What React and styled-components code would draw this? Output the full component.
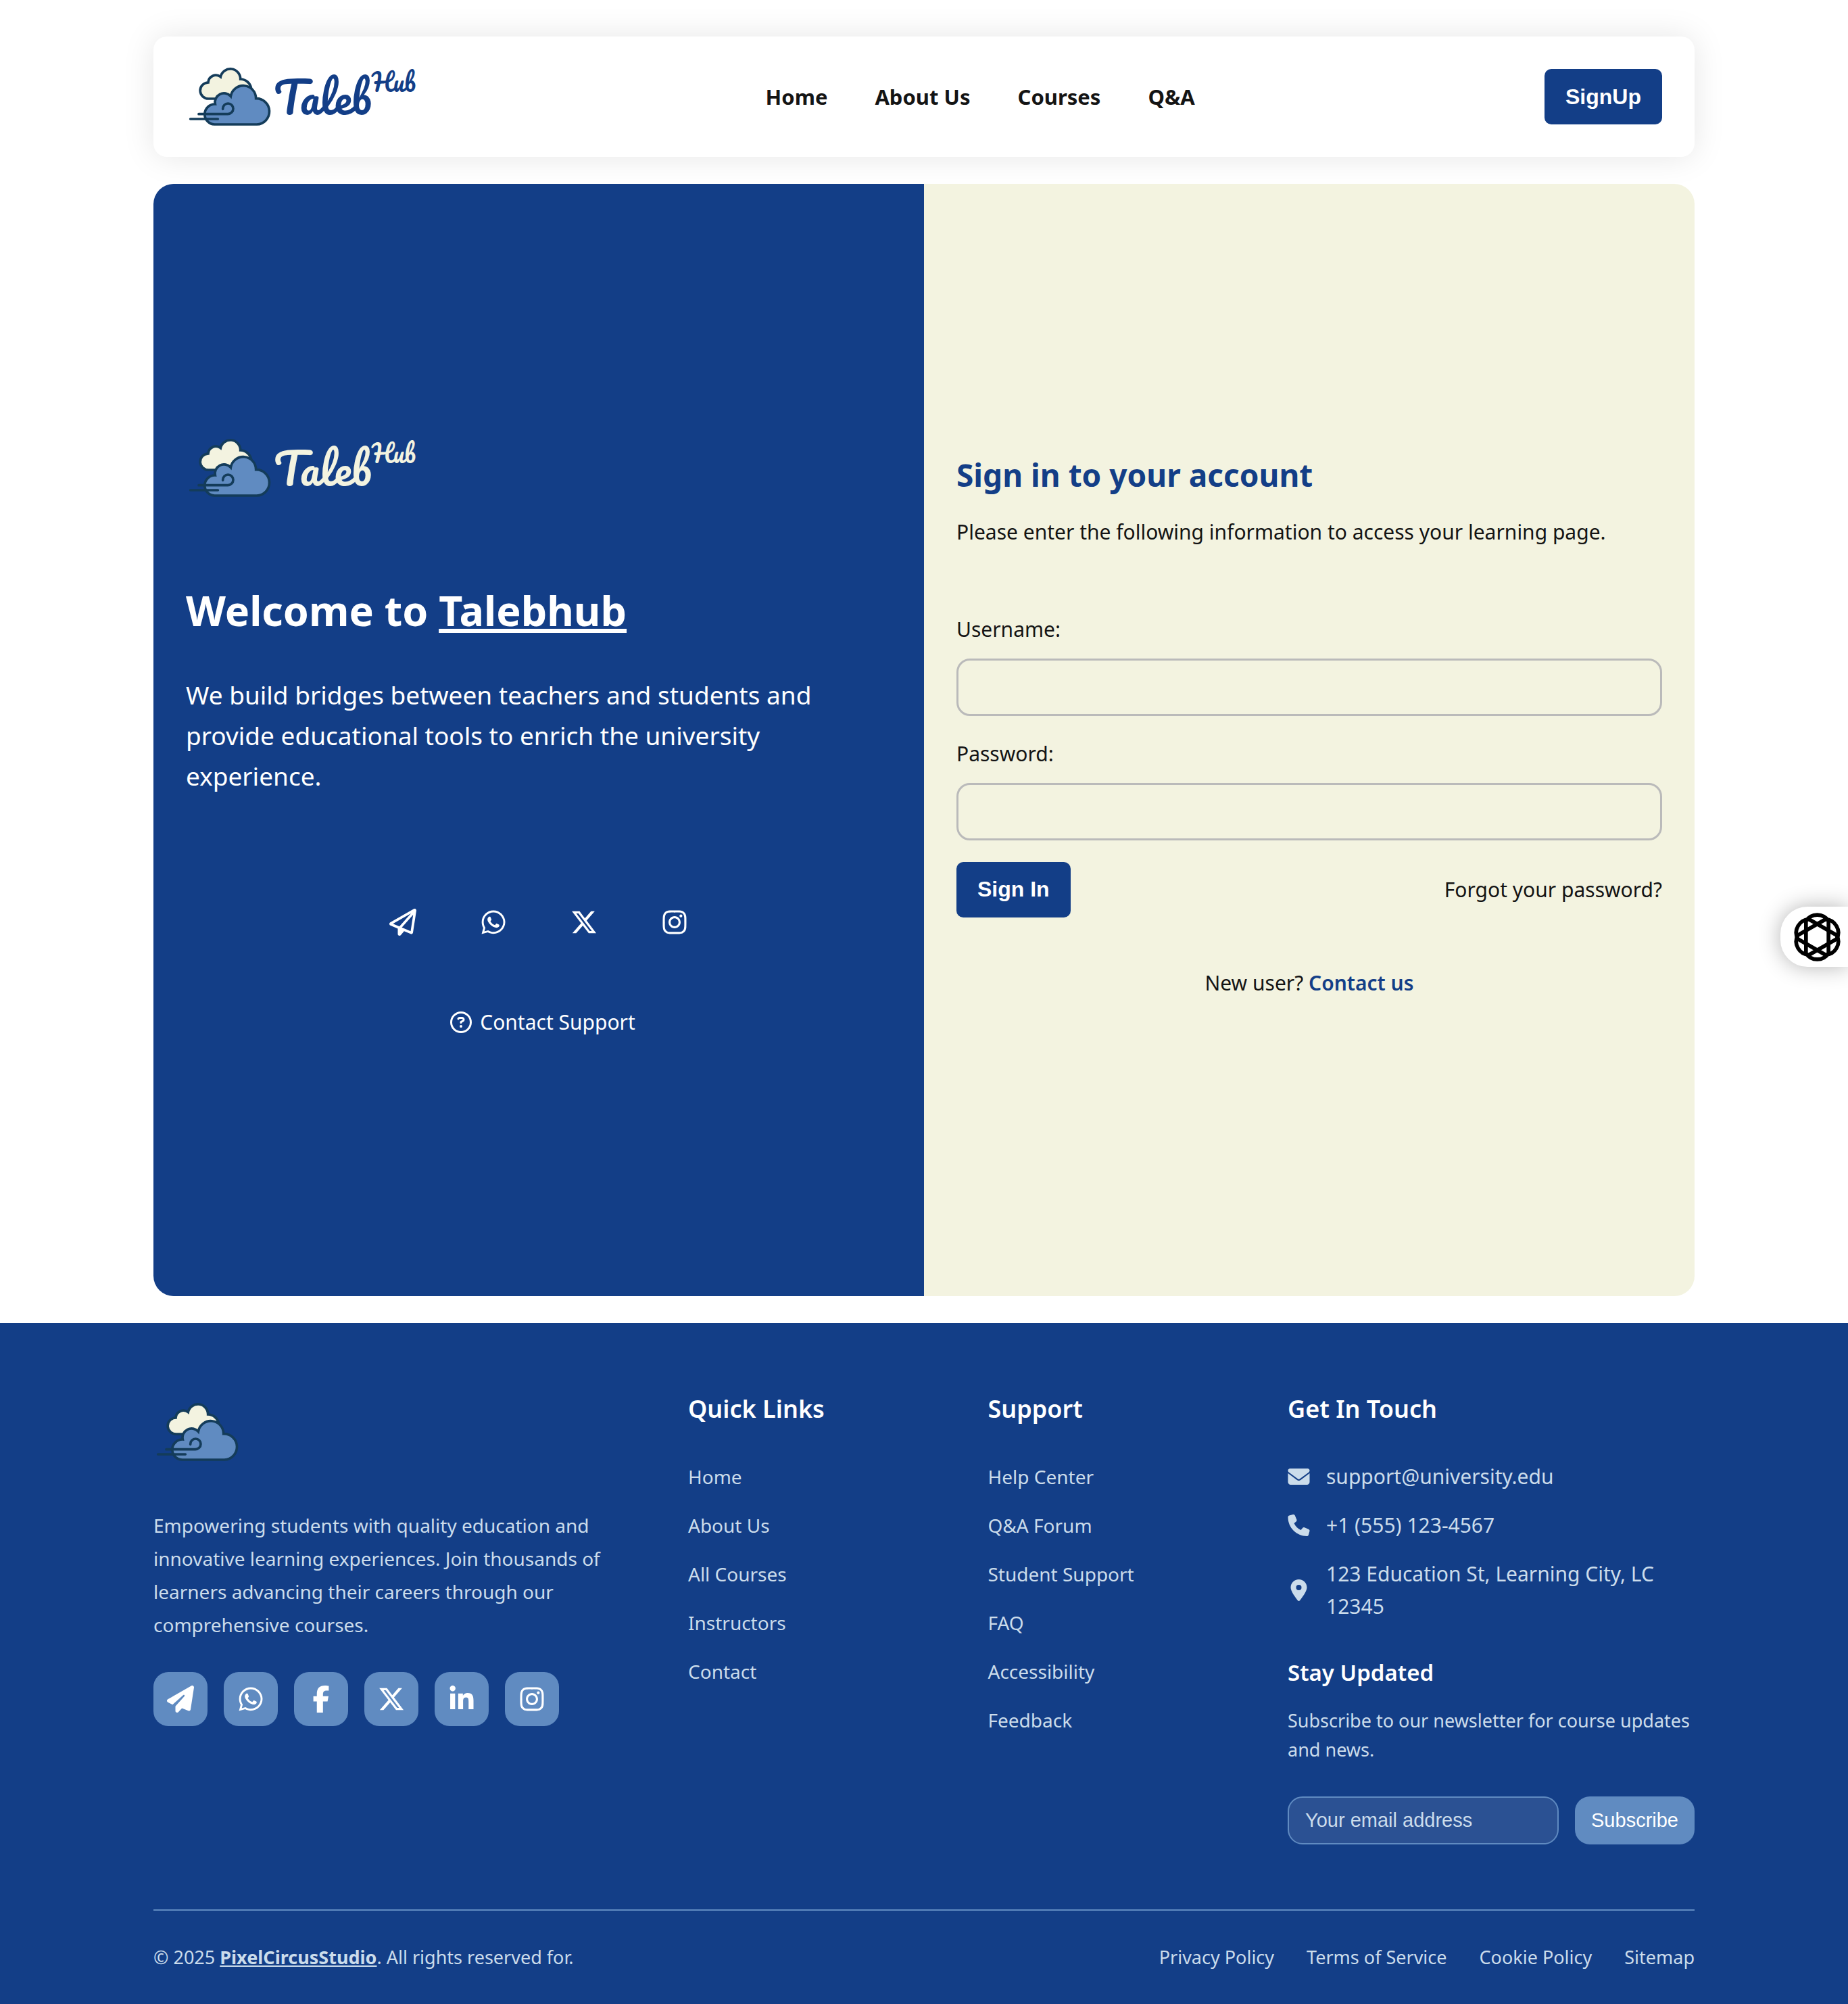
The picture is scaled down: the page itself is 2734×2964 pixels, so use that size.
import React from "react";
import styled, { createGlobalStyle } from "styled-components";
import {
  FaRegPaperPlane,
  FaPaperPlane,
  FaWhatsapp,
  FaXTwitter,
  FaInstagram,
  FaFacebookF,
  FaLinkedinIn,
  FaRegCircleQuestion,
  FaEnvelope,
  FaPhone,
  FaLocationDot,
} from "react-icons/fa6";

const color = {
  navy: "#133e87",
  cream: "#f3f3e0",
  sky: "#608bc1",
  ice: "#cbdceb",
  ink: "#141414",
  outline: "#143c5a",
};

const GlobalStyle = createGlobalStyle`
  *, *::before, *::after { box-sizing: border-box; }
  body {
    margin: 0;
    background: #fff;
    color: ${color.ink};
    font-family: "Noto Sans", "Open Sans", sans-serif;
    font-size: 30px;
    line-height: 48px;
    overflow-x: hidden;
  }
  h1, h2, h3, h4, p, ul { margin: 0; padding: 0; }
  ul { list-style: none; }
  a { color: inherit; text-decoration: none; }
  svg { display: block; flex: none; }
`;

const Container = styled.div`
  width: 100%;
  max-width: 2280px;
  margin: 0 auto;
`;

/* ---------- Logo ---------- */

const LogoRow = styled.a`
  display: flex;
  align-items: center;
  height: 90px;
  color: ${(p) => p.$tone};
  font-family: Pacifico, Lato, sans-serif;
`;

const CloudSvg = styled.svg`
  width: 130px;
  height: 90px;
`;

const LogoWord = styled.span`
  font-size: 64px;
  font-weight: 400;
  line-height: 90px;
`;

const LogoSup = styled.span`
  align-self: flex-start;
  font-size: 36px;
  font-weight: 400;
  line-height: 46px;
`;

function Cloud() {
  return (
    <CloudSvg
      viewBox="195 205 390 270"
      fill="none"
      stroke={color.outline}
      strokeWidth="11"
      strokeLinecap="round"
      aria-hidden="true"
    >
      <path
        fill={color.cream}
        d="M335 349H297A37 36 0 0 1 294 277A34 34 0 0 1 349 252A44.500 44.500 0 0 1 437 262A50 50 0 0 1 485 303L400 349Z"
      />
      <path
        fill={color.sky}
        d="M322 463A45 45 0 0 1 325 373A40 40 0 0 1 394 338A56.400 56.400 0 0 1 506 348A57 57 0 0 1 510 463Z"
      />
      <path d="M252 417H381A24 24 0 0 0 405 393A23 23 0 0 0 359 393V395" />
      <path d="M215 439H337" />
    </CloudSvg>
  );
}

function Logo({ tone }) {
  return (
    <LogoRow href="#" $tone={tone}>
      <Cloud />
      <LogoWord>Taleb</LogoWord>
      <LogoSup>Hub</LogoSup>
    </LogoRow>
  );
}

/* ---------- Header ---------- */

const Header = styled.header`
  display: flex;
  align-items: center;
  justify-content: space-between;
  min-height: 178px;
  margin: 54px 0 40px;
  padding: 0 48px;
  border-radius: 20px;
  background: #fff;
  box-shadow: 0 0 48px rgba(0, 0, 0, 0.1);
`;

const Nav = styled.nav`
  display: flex;
  gap: 70px;
  font-size: 31px;
  font-weight: 700;
`;

const PrimaryButton = styled.button`
  height: 82px;
  padding: 0 31px;
  border: 0;
  border-radius: 10px;
  background: ${color.navy};
  color: #fff;
  font: 700 32px "Liberation Sans", Arial, sans-serif;
`;

/* ---------- Sign-in card ---------- */

const Card = styled.main`
  display: grid;
  grid-template-columns: 1fr 1fr;
  min-height: 55.5vh;
  margin-bottom: 40px;
  border-radius: 30px;
  overflow: hidden;
`;

const Welcome = styled.section`
  display: flex;
  flex-direction: column;
  justify-content: center;
  align-items: flex-start;
  padding: 0 48px 4px;
  background: ${color.navy};
  color: #fff;
`;

const WelcomeTitle = styled.h1`
  margin: 126px 0 55px;
  font-size: 61px;
  font-weight: 700;
  line-height: 80px;

  span { text-decoration: underline; }
`;

const WelcomeText = styled.p`
  font-size: 37px;
  line-height: 60px;
`;

const PlainSocials = styled.div`
  display: flex;
  align-self: center;
  gap: 94px;
  margin: 166px 0 102px;

  svg { width: 40px; height: 40px; }
`;

const SupportLink = styled.a`
  display: flex;
  align-self: center;
  align-items: center;
  gap: 12px;
  padding-left: 12px;
  line-height: 52px;

  svg { width: 32px; height: 32px; }
`;

const SignIn = styled.form`
  display: flex;
  flex-direction: column;
  justify-content: center;
  padding: 0 48px 40px;
  background: ${color.cream};
`;

const SignInTitle = styled.h2`
  color: ${color.navy};
  font-size: 46px;
  font-weight: 700;
  line-height: 60px;
`;

const SignInText = styled.p`
  margin: 31px 0 96px;
`;

const Field = styled.div`
  display: flex;
  flex-direction: column;
  gap: 19px;
  margin-bottom: 32px;
`;

const FieldInput = styled.input`
  height: 85px;
  padding: 0 24px;
  border: 3px solid #bababa;
  border-radius: 20px;
  background: transparent;
  font: inherit;
`;

const FormActions = styled.div`
  display: flex;
  align-items: center;
  justify-content: space-between;
`;

const NewUser = styled.p`
  margin-top: 73px;
  text-align: center;

  a { color: ${color.navy}; font-weight: 600; }
`;

/* ---------- Footer ---------- */

const FooterBar = styled.footer`
  padding-top: 96px;
  background: ${color.navy};
  color: ${color.ice};
`;

const FooterGrid = styled.div`
  display: grid;
  grid-template-columns: 2fr 1fr 1fr 602px;
  gap: 96px;
  padding-bottom: 96px;
`;

const Brand = styled.div`
  padding-top: 20px;
`;

const BrandText = styled.p`
  margin: 69px 0 45px;
  font-size: 28px;
  line-height: 49px;
`;

const TileRow = styled.div`
  display: flex;
  gap: 24px;
`;

const SocialTile = styled.a`
  display: flex;
  align-items: center;
  justify-content: center;
  width: 80px;
  height: 80px;
  border-radius: 22px;
  background: ${color.sky};
  color: #fff;

  svg { width: 40px; height: 40px; }
`;

const FooterTitle = styled.h3`
  margin-bottom: 45px;
  color: #fff;
  font-size: 36px;
  font-weight: 600;
  line-height: 62px;
`;

const FooterList = styled.ul`
  display: flex;
  flex-direction: column;
  gap: 24px;
  font-size: ${(p) => (p.$large ? 30 : 28)}px;
`;

const ContactItem = styled.li`
  display: flex;
  align-items: center;
  gap: 24px;

  svg { width: 33px; height: 32px; }
`;

const Newsletter = styled.form`
  margin-top: 50px;
`;

const NewsletterTitle = styled.h4`
  color: #fff;
  font-size: 33px;
  font-weight: 600;
`;

const NewsletterText = styled.label`
  display: block;
  margin: 25px 0 48px;
  font-size: 27px;
  line-height: 43px;
`;

const NewsletterRow = styled.div`
  display: flex;
  gap: 24px;
`;

const EmailInput = styled.input`
  flex: 1;
  min-width: 0;
  height: 71px;
  padding: 0 24px;
  border: 2px solid ${color.sky};
  border-radius: 22px;
  background: rgba(255, 255, 255, 0.1);
  color: #fff;
  font: 29px "Liberation Sans", Arial, sans-serif;

  &::placeholder { color: ${color.ice}; opacity: 1; }
`;

const SubscribeButton = styled.button`
  height: 71px;
  padding: 0 24px;
  border: 0;
  border-radius: 22px;
  background: ${color.sky};
  color: #fff;
  font: 29px "Liberation Sans", Arial, sans-serif;
`;

const Legal = styled.div`
  display: flex;
  justify-content: space-between;
  padding: 45px 0;
  border-top: 2px solid ${color.sky};
  font-size: 27px;

  strong { text-decoration: underline; }
`;

const LegalLinks = styled.nav`
  display: flex;
  gap: 48px;
`;

/* ---------- Floating assistant tab ---------- */

const AssistantTab = styled.button`
  position: fixed;
  top: 1341px;
  right: 0;
  display: flex;
  align-items: center;
  width: 100px;
  height: 89px;
  padding: 0 0 0 18px;
  border: 0;
  border-radius: 40px 0 0 40px;
  background: #fff;
  box-shadow: 0 0 32px rgba(0, 0, 0, 0.3);
`;

const lobe = "M215 158A59 59 0 0 1 315 158V300A59 59 0 0 1 215 300Z";

function AssistantIcon() {
  return (
    <svg width="73" height="76" viewBox="155.500 115 219 228" fill="none" stroke="#000" strokeWidth="17" aria-hidden="true">
      <path d={lobe} />
      <path d={lobe} transform="rotate(60 265 229)" />
      <path d={lobe} transform="rotate(120 265 229)" />
    </svg>
  );
}

const navLinks = ["Home", "About Us", "Courses", "Q&A"];
const quickLinks = ["Home", "About Us", "All Courses", "Instructors", "Contact"];
const supportLinks = ["Help Center", "Q&A Forum", "Student Support", "FAQ", "Accessibility", "Feedback"];
const legalLinks = ["Privacy Policy", "Terms of Service", "Cookie Policy", "Sitemap"];
const welcomeSocials = [
  ["Telegram", FaRegPaperPlane],
  ["WhatsApp", FaWhatsapp],
  ["X", FaXTwitter],
  ["Instagram", FaInstagram],
];
const footerSocials = [
  ["Telegram", FaPaperPlane],
  ["WhatsApp", FaWhatsapp],
  ["Facebook", FaFacebookF],
  ["X", FaXTwitter],
  ["LinkedIn", FaLinkedinIn],
  ["Instagram", FaInstagram],
];
const contacts = [
  ["support@university.edu", FaEnvelope],
  ["+1 (555) 123-4567", FaPhone],
  ["123 Education St, Learning City, LC 12345", FaLocationDot],
];

function LinkColumn({ title, links }) {
  return (
    <div>
      <FooterTitle>{title}</FooterTitle>
      <FooterList>
        {links.map((label) => (
          <li key={label}>
            <a href="#">{label}</a>
          </li>
        ))}
      </FooterList>
    </div>
  );
}

export default function App() {
  return (
    <>
      <GlobalStyle />
      <Container>
        <Header>
          <Logo tone={color.navy} />
          <Nav>
            {navLinks.map((label) => (
              <a key={label} href="#">{label}</a>
            ))}
          </Nav>
          <PrimaryButton type="button">SignUp</PrimaryButton>
        </Header>

        <Card>
          <Welcome>
            <Logo tone={color.cream} />
            <WelcomeTitle>
              Welcome to <span>Talebhub</span>
            </WelcomeTitle>
            <WelcomeText>
              We build bridges between teachers and students and provide
              educational tools to enrich the university experience.
            </WelcomeText>
            <PlainSocials>
              {welcomeSocials.map(([label, Icon]) => (
                <a key={label} href="#" aria-label={label}><Icon /></a>
              ))}
            </PlainSocials>
            <SupportLink href="#">
              <FaRegCircleQuestion />
              Contact Support
            </SupportLink>
          </Welcome>

          <SignIn>
            <SignInTitle>Sign in to your account</SignInTitle>
            <SignInText>
              Please enter the following information to access your learning page.
            </SignInText>
            <Field>
              <label htmlFor="username">Username:</label>
              <FieldInput id="username" type="text" />
            </Field>
            <Field>
              <label htmlFor="password">Password:</label>
              <FieldInput id="password" type="password" />
            </Field>
            <FormActions>
              <PrimaryButton type="submit">Sign In</PrimaryButton>
              <a href="#">Forgot your password?</a>
            </FormActions>
            <NewUser>
              New user? <a href="#">Contact us</a>
            </NewUser>
          </SignIn>
        </Card>
      </Container>

      <FooterBar>
        <Container>
          <FooterGrid>
            <Brand>
              <Cloud />
              <BrandText>
                Empowering students with quality education and innovative
                learning experiences. Join thousands of learners advancing
                their careers through our comprehensive courses.
              </BrandText>
              <TileRow>
                {footerSocials.map(([label, Icon]) => (
                  <SocialTile key={label} href="#" aria-label={label}><Icon /></SocialTile>
                ))}
              </TileRow>
            </Brand>
            <LinkColumn title="Quick Links" links={quickLinks} />
            <LinkColumn title="Support" links={supportLinks} />
            <div>
              <FooterTitle>Get In Touch</FooterTitle>
              <FooterList $large>
                {contacts.map(([label, Icon]) => (
                  <ContactItem key={label}>
                    <Icon />
                    <span>{label}</span>
                  </ContactItem>
                ))}
              </FooterList>
              <Newsletter>
                <NewsletterTitle>Stay Updated</NewsletterTitle>
                <NewsletterText htmlFor="newsletter-email">
                  Subscribe to our newsletter for course updates and news.
                </NewsletterText>
                <NewsletterRow>
                  <EmailInput id="newsletter-email" type="email" placeholder="Your email address" />
                  <SubscribeButton type="submit">Subscribe</SubscribeButton>
                </NewsletterRow>
              </Newsletter>
            </div>
          </FooterGrid>
          <Legal>
            <p>
              © 2025 <strong>PixelCircusStudio</strong>. All rights reserved for.
            </p>
            <LegalLinks>
              {legalLinks.map((label) => (
                <a key={label} href="#">{label}</a>
              ))}
            </LegalLinks>
          </Legal>
        </Container>
      </FooterBar>

      <AssistantTab type="button" aria-label="Open assistant">
        <AssistantIcon />
      </AssistantTab>
    </>
  );
}
